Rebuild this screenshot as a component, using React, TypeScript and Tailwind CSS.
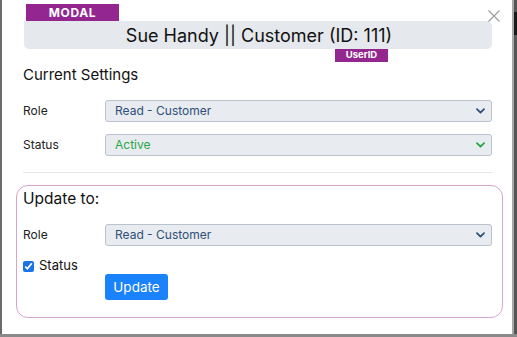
import React from "react";

function Chevron({ color }: { color: string }) {
  return (
    <svg width="9" height="6" viewBox="0 0 9 6" fill="none">
      <path d="M1 1.2 L4.5 4.6 L8 1.2" stroke={color} strokeWidth="1.8" strokeLinecap="round" strokeLinejoin="round" />
    </svg>
  );
}

function SelectBox({ text, color }: { text: string; color: string }) {
  return (
    <div className="flex-1 h-[22px] bg-[#e8ebef] border border-[#b9c2cd] rounded-[3px] flex items-center justify-between pl-[9px] pr-[6px]">
      <span className="text-[12px]" style={{ color }}>{text}</span>
      <Chevron color={color} />
    </div>
  );
}

function Row({ label, text, color }: { label: string; text: string; color: string }) {
  return (
    <div className="flex items-center">
      <span className="w-[82px] text-[12px] text-[#222]">{label}</span>
      <SelectBox text={text} color={color} />
    </div>
  );
}

export default function App() {
  return (
    <div className="w-[517px] h-[337px] bg-[#6e6e6e] flex flex-col overflow-hidden" style={{ fontFamily: "Inter, 'Open Sans', sans-serif" }}>
      <div className="flex h-[334px]">
        <div className="w-[2px] bg-[#6a6a6a]" />
        <div className="w-[510px] bg-white relative pl-[14px] pr-[9px] flex flex-col">
          <svg className="absolute left-[485px] top-[9px]" width="14" height="14" viewBox="0 0 14 14">
            <path d="M1.5 1.5 L12.5 12.5 M12.5 1.5 L1.5 12.5" stroke="#9a9a9a" strokeWidth="1.1" />
          </svg>
          <div className="pl-[7px] pr-[11px] flex flex-col">
            <div className="ml-[3px] mt-[4px] w-[93px] h-[17px] bg-[#93278f] text-white font-bold text-[12px] flex items-center justify-center tracking-[0.6px]">
              MODAL
            </div>
            <div className="ml-px h-[28px] bg-[#e5e8ec] rounded-b-[5px] rounded-tr-[5px] flex items-center justify-center text-[18px] text-[#111] pl-[2px]">
              Sue Handy || Customer (ID: 111)
            </div>
            <div className="ml-[312px] w-[53px] h-[13px] bg-[#93278f] text-white font-bold text-[9.5px] flex items-center justify-center">
              UserID
            </div>
            <div className="mt-[3px] text-[15px] text-[#111] leading-[20px]">Current Settings</div>
            <div className="mt-[15px] flex flex-col gap-[12px]">
              <Row label="Role" text="Read - Customer" color="#2f4f78" />
              <Row label="Status" text="Active" color="#28a745" />
            </div>
            <div className="mt-[16px] h-px bg-[#e6e6e6]" />
          </div>
          <div className="mt-[12px] h-[133px] border border-[#d6a4d3] rounded-[12px] pl-[6px] pr-[10px] flex flex-col">
            <div className="mt-[2px] text-[15.5px] text-[#111] leading-[22px]">Update to:</div>
            <div className="mt-[14px]">
              <Row label="Role" text="Read - Customer" color="#2f4f78" />
            </div>
            <div className="mt-[12px] flex items-center h-[16px]">
              <input type="checkbox" defaultChecked className="w-[11px] h-[11px] m-0 accent-[#1a73e8]" />
              <span className="ml-[5px] text-[13px] text-[#111]">Status</span>
            </div>
            <div className="pl-[82px]">
              <button className="w-[63px] h-[26px] bg-[#1a82fb] rounded-[3px] text-white text-[13.5px] flex items-center justify-center">
                Update
              </button>
            </div>
          </div>
        </div>
        <div className="w-[5px] flex flex-col">
          <div className="flex-1 flex">
            <div className="w-[2px] bg-[#a8a8a8]" />
            <div className="flex-1 flex flex-col bg-[#555]">
              <div className="h-[12px]" />
              <div className="h-[23px] bg-[#1a1a1a]" />
            </div>
          </div>
        </div>
      </div>
      <div className="h-[3px] bg-[#8a8a8a]" />
    </div>
  );
}
